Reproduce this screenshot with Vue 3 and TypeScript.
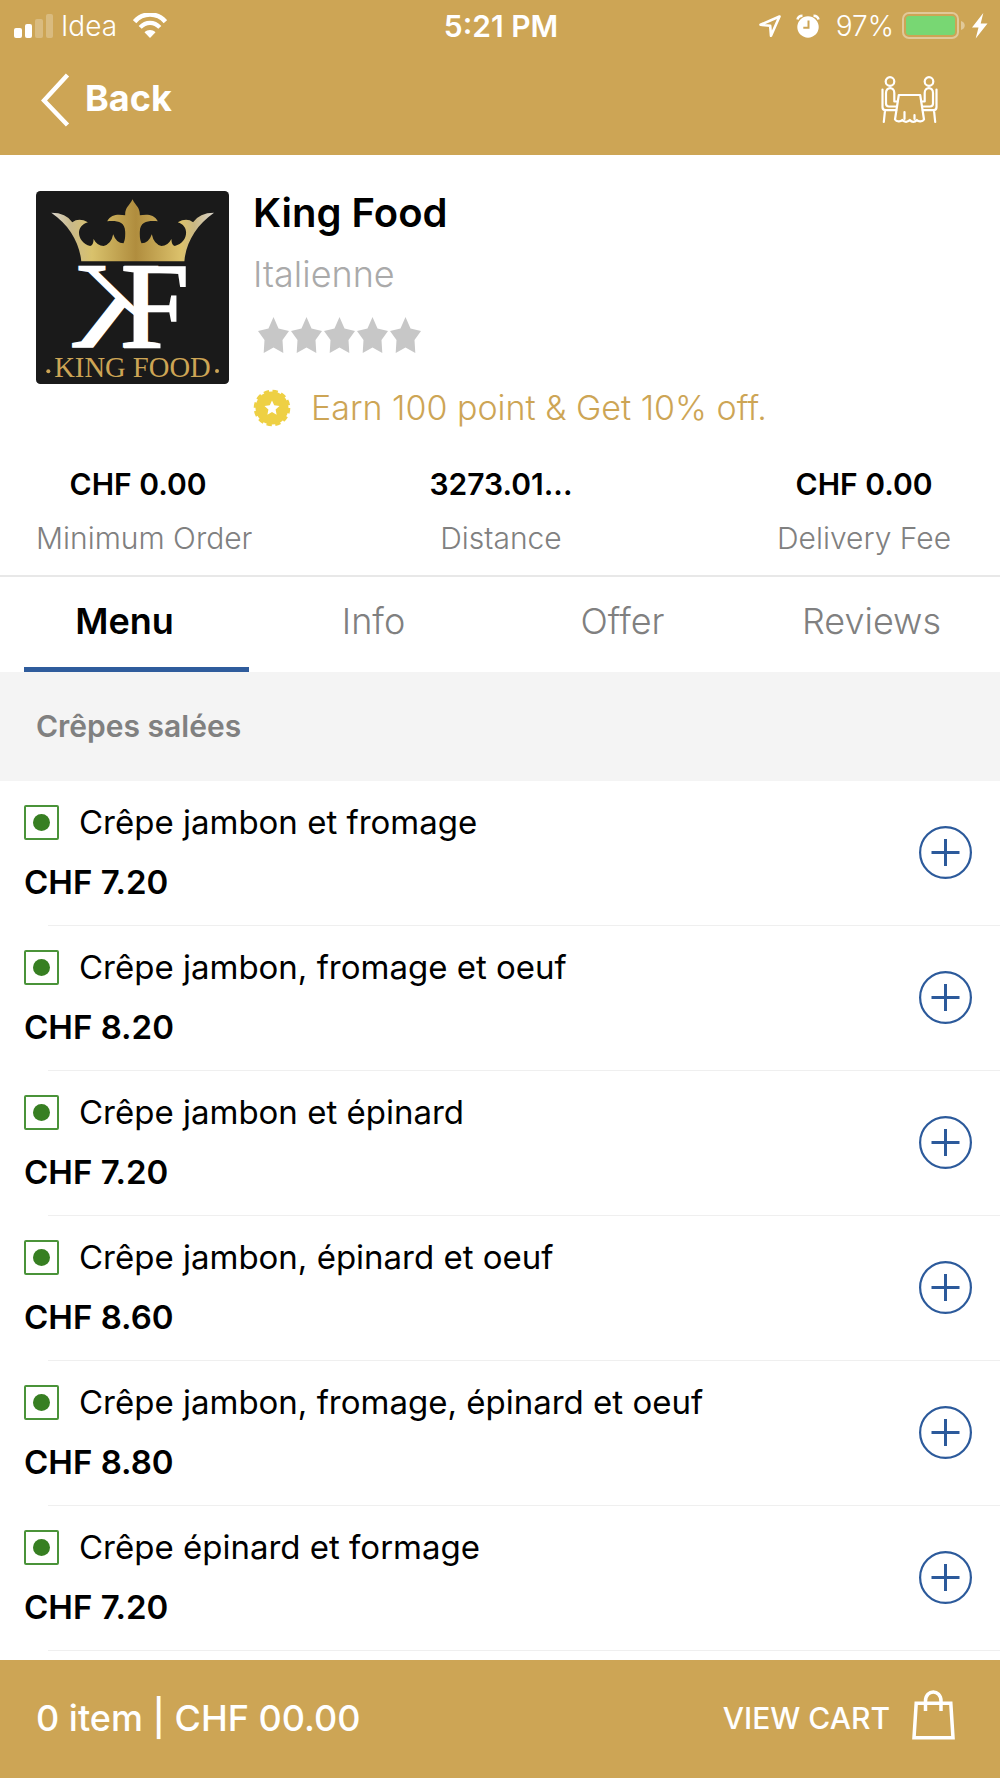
<script setup lang="ts">
import { ref } from 'vue'

interface Stat {
  value: string
  label: string
}

interface MenuItem {
  name: string
  price: string
}

const stats: Stat[] = [
  { value: 'CHF 0.00', label: 'Minimum Order' },
  { value: '3273.01...', label: 'Distance' },
  { value: 'CHF 0.00', label: 'Delivery Fee' },
]

const tabs: string[] = ['Menu', 'Info', 'Offer', 'Reviews']
const activeTab = ref<string>('Menu')

const items: MenuItem[] = [
  { name: 'Crêpe jambon et fromage', price: 'CHF 7.20' },
  { name: 'Crêpe jambon, fromage et oeuf', price: 'CHF 8.20' },
  { name: 'Crêpe jambon et épinard', price: 'CHF 7.20' },
  { name: 'Crêpe jambon, épinard et oeuf', price: 'CHF 8.60' },
  { name: 'Crêpe jambon, fromage, épinard et oeuf', price: 'CHF 8.80' },
  { name: 'Crêpe épinard et formage', price: 'CHF 7.20' },
]
</script>

<template>
  <div class="page">
    <header class="header">
      <div class="status">
        <div class="status-left">
          <svg width="40" height="26" viewBox="0 0 40 26" fill="#fff" aria-hidden="true">
            <rect x="0" y="15" width="8" height="10" rx="2" />
            <rect x="11" y="11" width="7" height="14" rx="2" />
            <rect x="21" y="6" width="8" height="19" rx="2" opacity=".25" />
            <rect x="32" y="1" width="7" height="24" rx="2" opacity=".25" />
          </svg>
          <span class="carrier">Idea</span>
          <svg class="wifi" width="34" height="26" viewBox="0 0 34 26" fill="none" stroke="#fff" aria-hidden="true">
            <path d="M1.600 8.600C10-.8 24-.8 32.400 8.600" stroke-width="4.600" />
            <path d="M7.200 14.400c5.600-6 14-6 19.600 0" stroke-width="4.200" />
            <path d="M11.500 19.300L17 25l5.500-5.700c-3-3.100-8-3.100-11 0z" fill="#fff" stroke="none" />
          </svg>
        </div>
        <span class="time">5:21 PM</span>
        <div class="status-right">
          <svg width="24" height="24" viewBox="0 0 24 24" fill="none" stroke="#fff" stroke-width="2.600" stroke-linejoin="round" aria-hidden="true">
            <path d="M21.500 2.500L2.500 10.800l9.700 1 .8 10z" />
          </svg>
          <svg class="alarm" width="24" height="24" viewBox="0 0 24 24" aria-hidden="true">
            <circle cx="12" cy="13" r="10.700" fill="#fff" />
            <path d="M1.500 5.500C2 3 4 1.800 6.500 1.800M22.500 5.500C22 3 20 1.800 17.500 1.800" fill="none" stroke="#fff" stroke-width="2.600" />
            <path d="M12.500 6.500v7.300H7.300" fill="none" stroke="#cda555" stroke-width="2" />
          </svg>
          <span class="percent">97%</span>
          <svg width="64" height="28" viewBox="0 0 64 28" aria-hidden="true">
            <rect x="1" y="1" width="55" height="25" rx="6" fill="none" stroke="#fff" stroke-opacity=".4" stroke-width="2" />
            <rect x="4" y="4" width="49" height="19" rx="3" fill="#78d773" />
            <path d="M59 9c5 1.500 5 7.500 0 9z" fill="#fff" fill-opacity=".4" />
          </svg>
          <svg class="bolt" width="16" height="26" viewBox="0 0 16 26" fill="#fff" aria-hidden="true">
            <path d="M11.300 0L0 14.500h6.500L3.700 25.500 15.500 10.500H8.700z" />
          </svg>
        </div>
      </div>
      <nav class="nav">
        <a class="back" href="#">
          <svg width="30" height="54" viewBox="0 0 30 54" fill="none" stroke="#fff" stroke-width="4.500" aria-hidden="true">
            <path d="M26.500 2L3 27.500 26.500 52" />
          </svg>
          <span>Back</span>
        </a>
        <button class="icon-button" type="button" aria-label="Book a table">
          <svg width="58" height="48" viewBox="0 0 58 48" fill="none" stroke="#fff" stroke-width="2.200" stroke-linecap="round" stroke-linejoin="round" aria-hidden="true">
            <circle cx="9" cy="5.500" r="4.300" />
            <circle cx="48" cy="5.500" r="4.300" />
            <path d="M1.500 13.500V31c0 2 1 3.200 3 3.200h10.700M4 34.500L2.800 46" />
            <path d="M55.500 13.500V31c0 2-1 3.200-3 3.200H41.800M53 34.500L54.200 46" />
            <path d="M16.300 25.500h-3V17c0-6.500-8.300-6.500-8.300 0v10.500c0 2 1.200 3 3 3h7.500" />
            <path d="M40.700 25.500h3V17c0-6.500 8.300-6.500 8.300 0v10.500c0 2-1.200 3-3 3h-7.500" />
            <path d="M17.800 19h21.400L43 43.500c-1.500 2.300-5.500 2.600-7.200.5-2 2.400-5 2.400-7 0-2.300 2.400-5.300 2.400-7.500 0-1.800 2.100-5.800 1.800-7.300-.5z" />
            <path d="M23.500 36v7M33.500 39v4" />
          </svg>
        </button>
      </nav>
    </header>

    <main class="main">
      <section class="summary">
        <div class="hero">
          <svg class="logo" width="193" height="193" viewBox="49 33 580 580" role="img" aria-label="King Food">
            <defs>
              <linearGradient id="gold" x1="0" x2="1" y1="0" y2="0">
                <stop offset="0" stop-color="#d9d4cc" />
                <stop offset=".12" stop-color="#c9b98a" />
                <stop offset=".25" stop-color="#d9c26c" />
                <stop offset=".52" stop-color="#b08d3e" />
                <stop offset=".8" stop-color="#dcc26c" />
                <stop offset=".88" stop-color="#c9b783" />
                <stop offset="1" stop-color="#d9d4cc" />
              </linearGradient>
            </defs>
            <rect x="49" y="33" width="580" height="580" rx="13" fill="#1a1a1a" />
            <path
              fill="url(#gold)"
              d="M185 244C180 190 150 135 95 98Q140 98 158 127Q178 112 205 127C165 138 172 188 212 198Q222 195 222 177Q233 198 252 198Q275 193 281 163Q290 190 312 190Q318 180 317 155C316 122 288 122 263 124C275 100 300 103 317 106C316 82 330 78 339 58C348 78 362 82 361 106C378 103 403 100 415 124C390 122 362 122 361 155Q360 180 366 190Q388 190 397 163Q403 193 426 198Q445 198 456 177Q456 195 466 198C506 188 513 138 475 127Q502 112 521 127Q540 98 584 98C530 135 499 190 495 244Z"
            />
            <g class="serif" font-size="372" fill="#fff" stroke="#fff" stroke-width="5">
              <text x="303" y="501">F</text>
              <text transform="translate(425 501) scale(-1 1)">K</text>
            </g>
            <text class="serif" x="339" y="593" font-size="86" text-anchor="middle" fill="#cda555">KING FOOD</text>
            <circle cx="86" cy="575" r="6" fill="#cda555" />
            <circle cx="593" cy="574" r="6" fill="#cda555" />
          </svg>
          <div class="info">
            <h1 class="title">King Food</h1>
            <p class="cuisine">Italienne</p>
            <div class="stars" role="img" aria-label="0 of 5 stars">
              <svg v-for="n in 5" :key="n" width="31" height="36" viewBox="0 0 31 36" fill="#c7c7c7">
                <path d="M15.500 0l5 11.500L31 14l-6.500 9 .8 13-9.800-5.500L5.700 36l.8-13L0 14l10.500-2.500z" />
              </svg>
            </div>
            <p class="promo">
              <svg width="38" height="38" viewBox="-19 -19 38 38" aria-hidden="true">
                <circle r="16.500" fill="#eed044" />
                <circle r="16.500" fill="none" stroke="#eed044" stroke-width="3.600" stroke-dasharray="5.200 3.440" />
                <path d="M0-7.500l2.200 4.800 5.300.6-3.900 3.600 1 5.200L0 4.100l-4.600 2.600 1-5.200-3.900-3.600 5.300-.6z" fill="#fff" />
              </svg>
              <span>Earn 100 point &amp; Get 10% off.</span>
            </p>
          </div>
        </div>
        <dl class="stats">
          <div v-for="stat in stats" :key="stat.label" class="stat">
            <dt>{{ stat.label }}</dt>
            <dd>{{ stat.value }}</dd>
          </div>
        </dl>
      </section>

      <div class="tabs" role="tablist">
        <button
          v-for="tab in tabs"
          :key="tab"
          type="button"
          role="tab"
          class="tab"
          :class="{ active: tab === activeTab }"
          :aria-selected="tab === activeTab"
          @click="activeTab = tab"
        >
          {{ tab }}
        </button>
      </div>

      <h2 class="category">Crêpes salées</h2>

      <ul class="items">
        <li v-for="item in items" :key="item.name" class="item">
          <div class="item-text">
            <div class="item-name">
              <span class="veg"></span>
              <span>{{ item.name }}</span>
            </div>
            <span class="price">{{ item.price }}</span>
          </div>
          <button class="add" type="button" :aria-label="`Add ${item.name}`">
            <svg width="53" height="53" viewBox="0 0 53 53" fill="none" stroke="#2c5a9b" aria-hidden="true">
              <circle cx="26.500" cy="26.500" r="25.400" stroke-width="2.200" />
              <path d="M12.500 26.500h28M26.500 13v27" stroke-width="3" />
            </svg>
          </button>
        </li>
      </ul>
    </main>

    <footer class="cart">
      <span class="cart-total">0 item | CHF 00.00</span>
      <button class="view-cart" type="button">
        <span>VIEW CART</span>
        <svg width="43" height="50" viewBox="0 0 43 50" fill="none" stroke="#fff" aria-hidden="true">
          <path d="M4.200 13.300h34.600L41 47.700H2z" stroke-width="3.500" />
          <path d="M13.500 21V11c0-12 15.500-12 15.500 0v10" stroke-width="3.500" />
        </svg>
      </button>
    </footer>
  </div>
</template>

<style>
body {
  margin: 0;
  background: #fff;
}
</style>

<style scoped>
.page {
  display: flex;
  flex-direction: column;
  min-height: 100vh;
  font-family: Inter, 'Liberation Sans', sans-serif;
  color: #000;
}

h1,
h2,
p,
dl,
dd,
ul {
  margin: 0;
  padding: 0;
}

button {
  border: 0;
  padding: 0;
  background: none;
  font-family: inherit;
  color: inherit;
  cursor: pointer;
}

svg {
  display: block;
  flex: none;
}

.header {
  background: #cda555;
  color: #fff;
  padding-bottom: 7px;
}

.status {
  display: grid;
  grid-template-columns: 1fr auto 1fr;
  align-items: center;
  height: 52px;
  padding: 0 12px 0 14px;
  font-size: 28px;
}

.status-left,
.status-right {
  display: flex;
  align-items: center;
}

.status-right {
  justify-content: flex-end;
}

.carrier {
  margin-left: 7px;
  font-weight: 300;
}

.wifi {
  margin-left: 16px;
}

.time {
  font-size: 30px;
  font-weight: 600;
}

.alarm {
  margin-left: 14px;
}

.percent {
  margin: 0 8px 0 16px;
  font-weight: 300;
}

.bolt {
  margin-left: 6px;
}

.nav {
  display: flex;
  align-items: center;
  justify-content: space-between;
  height: 96px;
  padding: 0 61px 0 41px;
}

.back {
  display: flex;
  align-items: flex-start;
  gap: 14px;
  color: #fff;
  font-size: 36px;
  font-weight: 700;
  line-height: 50px;
  text-decoration: none;
}

.main {
  flex: 1;
}

.summary {
  border-bottom: 2px solid #e8e8e8;
  padding: 36px 34px 19px 36px;
}

.hero {
  display: flex;
  align-items: flex-start;
  gap: 24px;
}

.serif {
  font-family: 'Liberation Serif', serif;
}

.title {
  font-size: 40px;
  font-weight: 600;
  line-height: 44px;
}

.cuisine {
  margin-top: 16px;
  font-size: 36px;
  font-weight: 300;
  line-height: 46px;
  color: #aaa;
}

.stars {
  display: flex;
  gap: 2px;
  margin: 20px 0 36px 5px;
}

.promo {
  display: flex;
  align-items: center;
  gap: 20px;
  font-size: 34px;
  font-weight: 300;
  line-height: 38px;
  color: #cda555;
}

.stats {
  display: flex;
  justify-content: space-between;
  margin-top: 39px;
}

.stat {
  display: flex;
  flex-direction: column-reverse;
  gap: 18px;
  width: 204px;
  font-size: 30px;
  line-height: 36px;
  text-align: center;
  white-space: nowrap;
}

.stat dt {
  font-weight: 300;
  color: #808080;
}

.stat dd {
  font-weight: 600;
}

.tabs {
  display: flex;
  padding-right: 4px;
}

.tab {
  position: relative;
  flex: 1;
  height: 95px;
  padding-bottom: 8px;
  font-size: 36px;
  font-weight: 300;
  color: #808080;
}

.tab.active {
  font-weight: 600;
  color: #000;
}

.tab.active::after {
  content: '';
  position: absolute;
  right: 0;
  bottom: 0;
  left: 24px;
  height: 5px;
  background: #2f5c9c;
}

.category {
  padding: 0 36px;
  background: #f4f4f4;
  font-size: 30px;
  font-weight: 600;
  line-height: 109px;
  color: #808080;
}

.items {
  list-style: none;
}

.item {
  position: relative;
  display: flex;
  align-items: center;
  justify-content: space-between;
  padding: 24px 28px 26px 24px;
}

.item::after {
  content: '';
  position: absolute;
  right: 0;
  bottom: 0;
  left: 48px;
  height: 1px;
  background: #efefef;
}

.item-text {
  display: flex;
  flex-direction: column;
  gap: 25px;
  font-size: 33px;
  line-height: 35px;
}

.item-name {
  display: flex;
  align-items: center;
  gap: 20px;
}

.veg {
  display: flex;
  align-items: center;
  justify-content: center;
  flex: none;
  box-sizing: border-box;
  width: 35px;
  height: 35px;
  border: 2px solid #4a9339;
  border-radius: 2px;
}

.veg::before {
  content: '';
  width: 17px;
  height: 17px;
  border-radius: 50%;
  background: #377f22;
}

.price {
  font-weight: 600;
}

.cart {
  display: flex;
  align-items: center;
  justify-content: space-between;
  box-sizing: border-box;
  height: 118px;
  padding: 0 45px 2px 36px;
  background: #cda555;
  color: #fff;
  font-weight: 500;
}

.cart-total {
  font-size: 36px;
}

.view-cart {
  display: flex;
  align-items: flex-start;
  gap: 22px;
  font-size: 30px;
  font-weight: 500;
  line-height: 56px;
}
</style>
